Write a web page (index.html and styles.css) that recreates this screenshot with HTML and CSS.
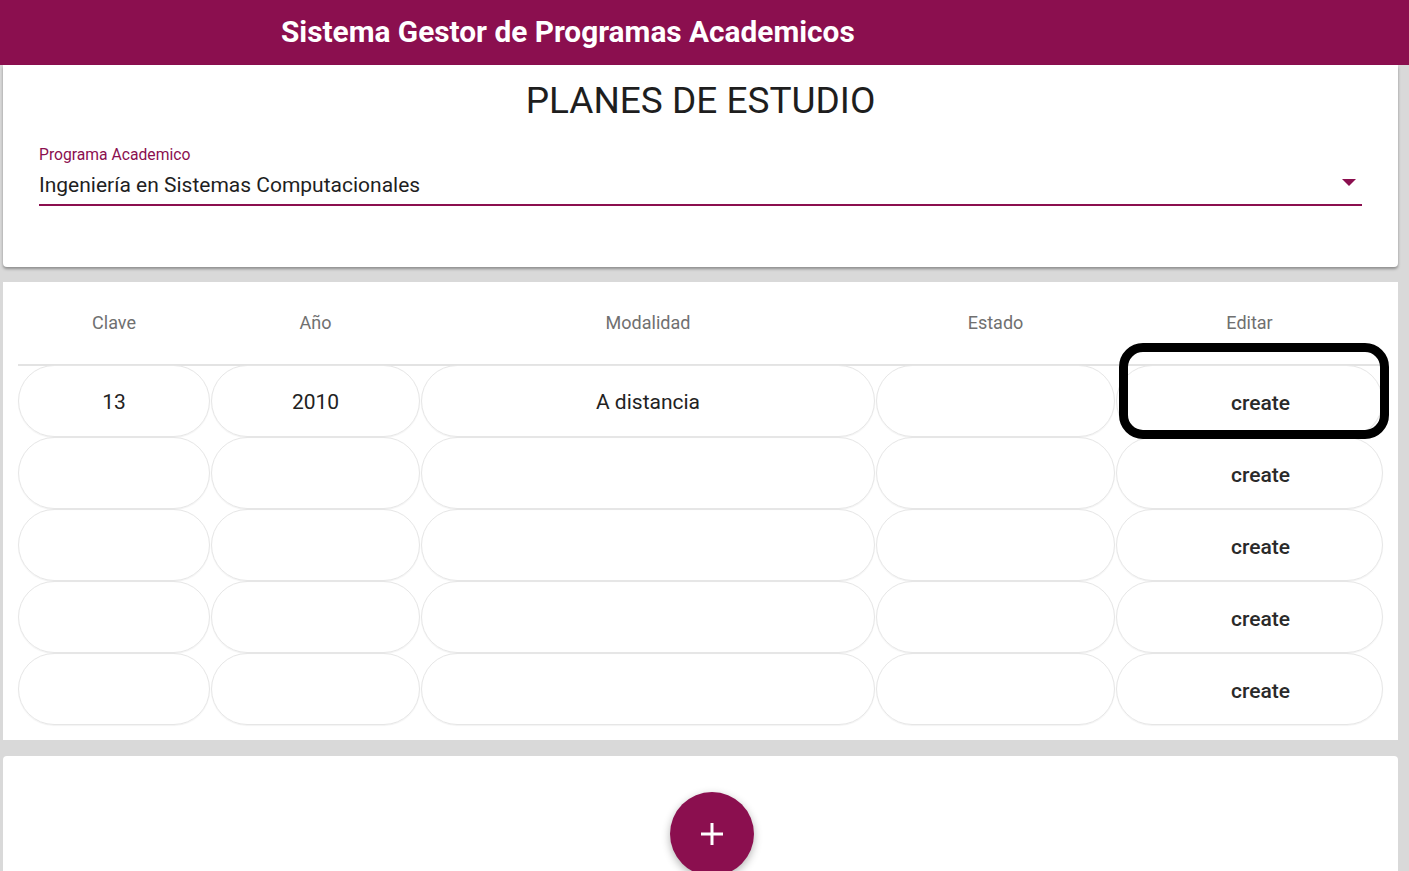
FILE: index.html
```html
<!DOCTYPE html>
<html lang="es">
<head>
<meta charset="utf-8">
<title>Planes de estudio</title>
<link rel="stylesheet" href="styles.css">
</head>
<body>
<header class="topbar">
  <h1 class="app-title">Sistema Gestor de Programas Academicos</h1>
</header>
<main class="content">
  <section class="card card-select">
    <h2 class="page-title">PLANES DE ESTUDIO</h2>
    <div class="field">
      <label class="field-label">Programa Academico</label>
      <div class="field-control">
        <span class="field-value">Ingeniería en Sistemas Computacionales</span>
        <span class="field-arrow"></span>
      </div>
    </div>
  </section>

  <section class="card card-table">
    <div class="grid grid-head">
      <div class="th">Clave</div>
      <div class="th">Año</div>
      <div class="th">Modalidad</div>
      <div class="th">Estado</div>
      <div class="th">Editar</div>
    </div>
    <div class="grid grid-body">
      <div class="td">13</div><div class="td">2010</div><div class="td">A distancia</div><div class="td"></div><div class="td td-edit highlighted">create</div>
      <div class="td"></div><div class="td"></div><div class="td"></div><div class="td"></div><div class="td td-edit">create</div>
      <div class="td"></div><div class="td"></div><div class="td"></div><div class="td"></div><div class="td td-edit">create</div>
      <div class="td"></div><div class="td"></div><div class="td"></div><div class="td"></div><div class="td td-edit">create</div>
      <div class="td"></div><div class="td"></div><div class="td"></div><div class="td"></div><div class="td td-edit">create</div>
    </div>
  </section>

  <section class="card card-actions">
    <button class="fab" aria-label="Agregar">
      <svg width="26" height="26" viewBox="0 0 26 26"><path d="M13 2v22M2 13h22" stroke="#fff" stroke-width="3" fill="none"/></svg>
    </button>
  </section>
</main>
</body>
</html>
```

FILE: styles.css
```css
* { box-sizing: border-box; }
html, body { margin: 0; padding: 0; }
body {
  background: #d9d9d9;
  font-family: Roboto, "Noto Sans", "Liberation Sans", sans-serif;
  color: #212121;
  overflow: hidden;
  height: 871px;
}
.topbar {
  height: 65px;
  background: #8b0f4f;
  display: flex;
  align-items: center;
  padding-left: 281px;
}
.app-title {
  margin: 0;
  color: #fff;
  font-size: 29.8px;
  font-weight: 700;
  line-height: 1;
  position: relative;
  top: -1px;
}
.content {
  display: flex;
  flex-direction: column;
  padding: 0 11px 0 3px;
}
.card {
  background: #fff;
  border-radius: 0 0 4px 4px;
}
.card-select {
  height: 202px;
  padding: 13px 36px 0 36px;
  box-shadow: 0 2px 3px rgba(0,0,0,0.35);
}
.page-title {
  margin: 0;
  text-align: center;
  font-size: 37px;
  font-weight: 400;
  line-height: 46px;
  color: #1e1e1e;
}
.field { margin-top: 22px; }
.field-label {
  display: block;
  font-size: 15.7px;
  line-height: 18px;
  color: #8b0f4f;
}
.field-control {
  display: flex;
  align-items: center;
  justify-content: space-between;
  margin-top: 9px;
  padding-bottom: 7px;
  border-bottom: 2px solid #8b0f4f;
}
.field-value {
  font-size: 21px;
  line-height: 24px;
  color: #1f1f1f;
}
.field-arrow {
  width: 0; height: 0;
  border-left: 7.5px solid transparent;
  border-right: 7.5px solid transparent;
  border-top: 7px solid #8b0f4f;
  margin-right: 6px;
  margin-top: -5px;
}
.card-table {
  margin-top: 15px;
  height: 458px;
  border-radius: 0;
  padding: 0 15px;
}
.grid {
  display: grid;
  grid-template-columns: 192px 209px 454px 239px 267px;
  column-gap: 1px;
}
.grid-head {
  height: 84px;
  border-bottom: 2px solid #e3e3e3;
  align-items: center;
}
.th {
  text-align: center;
  font-size: 18px;
  font-weight: 400;
  color: #707070;
  margin-top: -2px;
}
.grid-body { margin-top: -1px; }
.td {
  height: 72px;
  border: 1px solid #e6e6e6;
  border-radius: 36px;
  box-shadow: 0 1px 1px rgba(0,0,0,0.05);
  display: flex;
  align-items: center;
  justify-content: center;
  font-size: 21px;
  color: #222;
  padding-top: 2px;
}
.td-edit {
  padding-left: 22px;
  padding-top: 4px;
  font-weight: 500;
  color: #2a2a2a;
}
.highlighted { position: relative; }
.highlighted::after {
  content: "";
  position: absolute;
  left: 2px;
  right: -7px;
  top: -23px;
  bottom: -3px;
  border: 9px solid #000;
  border-radius: 24px;
}
.card-actions {
  margin-top: 16px;
  height: 200px;
  border-radius: 4px 4px 0 0;
  display: flex;
  justify-content: center;
  padding-top: 36px;
}
.fab {
  width: 84px;
  height: 84px;
  border-radius: 50%;
  border: none;
  background: #8b0f4f;
  display: flex;
  align-items: center;
  justify-content: center;
  box-shadow: 0 3px 8px rgba(0,0,0,0.3);
  padding: 0;
  margin-left: 23px;
}
```
